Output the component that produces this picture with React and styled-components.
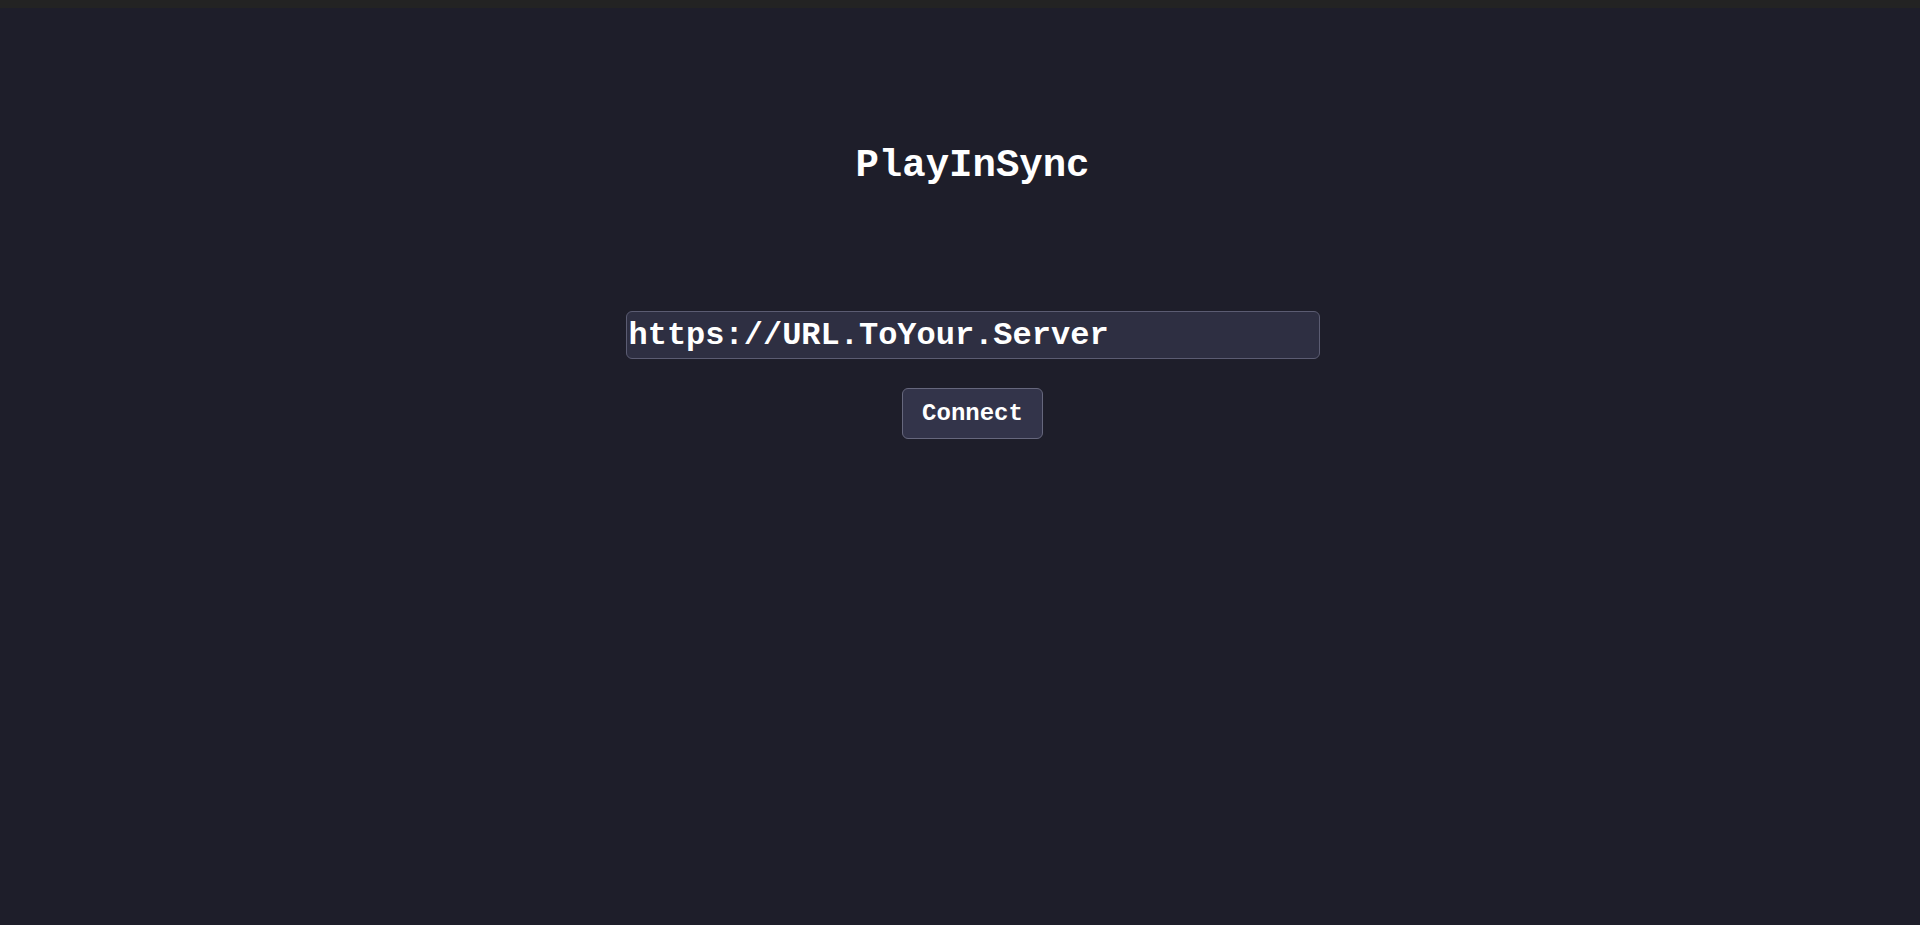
import React, { useState } from 'react';
import styled, { createGlobalStyle } from 'styled-components';

const GlobalStyle = createGlobalStyle`
    html, body {
        margin: 0;
        padding: 0;
        background-color: #1e1e2a;
        font-family: "Liberation Mono", "Courier New", monospace;
    }
`;

const TopBar = styled.div`
    height: 8px;
    background-color: #232323;
`;

const Page = styled.div`
    display: flex;
    flex-direction: column;
    align-items: center;
    padding: 1px 0 0 25px;
`;

const Title = styled.h1`
    margin: 134px 0 0;
    font-size: 39px;
    line-height: 47px;
    font-weight: 700;
    color: #ffffff;
`;

const Form = styled.div`
    display: flex;
    flex-direction: column;
    align-items: center;
    gap: 29px;
    margin-top: 121px;
`;

const UrlInput = styled.input`
    width: 694px;
    height: 48px;
    box-sizing: border-box;
    padding: 0 2px;
    background-color: #2e2f42;
    border: 1px solid #5b5c72;
    border-radius: 6px;
    color: #ffffff;
    font-family: "Liberation Mono", "Courier New", monospace;
    font-size: 32px;
    font-weight: 700;
    outline: none;
`;

const Button = styled.button`
    width: 141px;
    height: 51px;
    box-sizing: border-box;
    background-color: #33344a;
    border: 1px solid #66677d;
    border-radius: 6px;
    color: #ffffff;
    font-family: "Liberation Mono", "Courier New", monospace;
    font-size: 24px;
    font-weight: 700;
    cursor: pointer;
`;

function App() {
    const [url, setUrl] = useState('https://URL.ToYour.Server');

    return (
        <>
            <GlobalStyle />
            <TopBar />
            <Page>
                <Title>PlayInSync</Title>
                <Form>
                    <UrlInput value={url} onChange={(e) => setUrl(e.target.value)} />
                    <Button>Connect</Button>
                </Form>
            </Page>
        </>
    );
}

export default App;
